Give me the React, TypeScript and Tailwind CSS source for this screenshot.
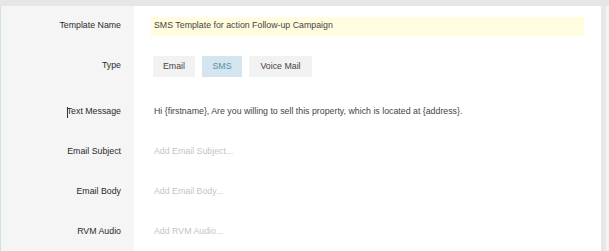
const rows = [
  { label: 'Email Subject', placeholder: 'Add Email Subject...' },
  { label: 'Email Body', placeholder: 'Add Email Body...' },
  { label: 'RVM Audio', placeholder: 'Add RVM Audio...' },
];

function Label({ children, caret, pad }: { children: React.ReactNode; caret?: boolean; pad?: boolean }) {
  return (
    <div
      className={
        pad
          ? 'w-[133px] shrink-0 bg-[#f5f5f5] pr-[13px] pt-[6px] flex items-center justify-end text-[#2a2a2a]'
          : 'w-[133px] shrink-0 bg-[#f5f5f5] pr-[13px] flex items-center justify-end text-[#2a2a2a]'
      }
    >
      {caret && <span className="w-px h-[11px] bg-[#333] mr-[-1px]" />}
      {children}
    </div>
  );
}

export default function App() {
  return (
    <div
      className="w-[609px] h-[251px] bg-[#e6e6e6] flex flex-col overflow-hidden text-[8.8px]"
      style={{ fontFamily: '"Liberation Sans", Arial, sans-serif' }}
    >
      <div className="flex flex-1 pt-[6px]">
        <div className="flex flex-1 border-l border-[#cfe5dc] bg-white">
          <div className="flex flex-col flex-1">
            <div className="flex h-[40px]">
              <Label>Template Name</Label>
              <div className="flex-1 flex items-center pl-[17px] pr-[17px]">
                <div className="w-full h-[19px] bg-[#fffce0] flex items-center px-[3px] text-[#444]">
                  SMS Template for action Follow-up Campaign
                </div>
              </div>
            </div>
            <div className="flex h-[40px]">
              <Label>Type</Label>
              <div className="flex-1 flex items-center pl-[19px] gap-[7px] pt-[1px]">
                <button className="h-[21px] w-[42px] bg-[#f2f2f2] text-[#444]">Email</button>
                <button className="h-[21px] w-[40px] bg-[#d3e5ee] text-[#5d8ea6]">SMS</button>
                <button className="h-[21px] w-[63px] bg-[#f2f2f2] text-[#444]">Voice Mail</button>
              </div>
            </div>
            <div className="flex h-[46px]">
              <Label caret pad>Text Message</Label>
              <div className="flex-1 flex items-center pl-[20px] pt-[6px] text-[#444]">
                Hi {'{firstname}'}, Are you willing to sell this property, which is located at {'{address}'}.
              </div>
            </div>
            {rows.map((r) => (
              <div key={r.label} className="flex h-[40px]">
                <Label>{r.label}</Label>
                <div className="flex-1 flex items-center pl-[20px] text-[#c4c4c4]">{r.placeholder}</div>
              </div>
            ))}
          </div>
          <div className="w-[5px] bg-[#e8e8e8]" />
          <div className="w-[3px] bg-[#f4f4f4]" />
        </div>
      </div>
      <div className="h-[5px] bg-[#d0e6de]" />
    </div>
  );
}
